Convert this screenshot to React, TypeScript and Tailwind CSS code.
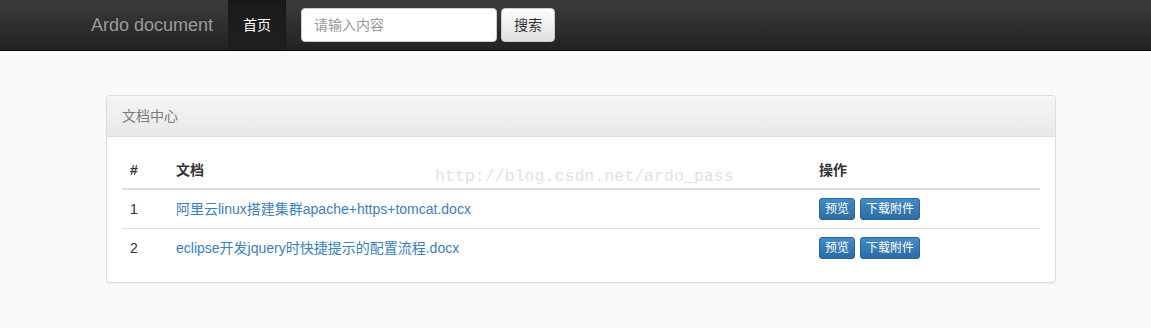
import React from 'react'

type Doc = {
  id: number
  name: string
}

const docs: Doc[] = [
  { id: 1, name: '阿里云linux搭建集群apache+https+tomcat.docx' },
  { id: 2, name: 'eclipse开发jquery时快捷提示的配置流程.docx' },
]

const font = "font-['Liberation_Sans','Noto_Sans_CJK_SC',sans-serif]"

function Navbar() {
  return (
    <nav className="h-[51px] border-b border-[#080808] bg-gradient-to-b from-[#3c3c3c] to-[#222222]">
      <div className="flex h-[50px] items-stretch pl-[76px]">
        <a className="flex items-center px-[15px] text-[18px] text-[#9d9d9d] [text-shadow:0_-1px_0_rgba(0,0,0,0.25)]">
          Ardo document
        </a>
        <a className="flex items-center bg-gradient-to-b from-[#1b1b1b] to-[#202020] px-[15px] text-[14px] text-white shadow-[inset_0_3px_9px_rgba(0,0,0,0.15)]">
          首页
        </a>
        <form className="flex items-start gap-[4px] px-[15px] pt-[8px]" onSubmit={(e) => e.preventDefault()}>
          <input
            className="h-[34px] w-[196px] rounded-[4px] border border-[#cccccc] bg-white px-[12px] text-[14px] text-[#555] placeholder:text-[#999] outline-none"
            placeholder="请输入内容"
          />
          <button
            type="submit"
            className="h-[34px] rounded-[4px] border border-[#cccccc] bg-gradient-to-b from-white to-[#e0e0e0] px-[12px] text-[14px] text-[#333]"
          >
            搜索
          </button>
        </form>
      </div>
    </nav>
  )
}

function SmallBtn({ children }: { children: React.ReactNode }) {
  return (
    <button className="h-[22px] rounded-[3px] border border-[#2b669a] bg-gradient-to-b from-[#428bca] to-[#2d6ca2] px-[5px] text-[12px] leading-[18px] text-white">
      {children}
    </button>
  )
}

export default function App() {
  return (
    <div className={`min-h-[328px] bg-[#f9f9f9] text-[14px] text-[#333] ${font}`}>
      <Navbar />

      <div className="ml-[106px] mt-[44px] w-[950px] rounded-[4px] border border-[#dddddd] bg-white shadow-[0_1px_2px_rgba(0,0,0,0.05)]">
        <div className="h-[41px] rounded-t-[4px] border-b border-[#dddddd] bg-gradient-to-b from-[#f5f5f5] to-[#e8e8e8] px-[15px] py-[10px] leading-[20px] text-[#7a7a7a]">
          文档中心
        </div>

        <div className="relative p-[15px]">
          <span className="pointer-events-none absolute left-[328px] top-[28px] font-['Liberation_Mono',monospace] text-[16.6px] text-[#e2e2e2]">
            http://blog.csdn.net/ardo_pass
          </span>

          <table className="w-full border-collapse">
            <thead>
              <tr className="border-b-2 border-[#dddddd]">
                <th className="w-[46px] p-[8px] text-left leading-[20px] font-bold">#</th>
                <th className="w-[643px] p-[8px] text-left leading-[20px] font-bold">文档</th>
                <th className="p-[8px] text-left leading-[20px] font-bold">操作</th>
              </tr>
            </thead>
            <tbody>
              {docs.map((d, i) => (
                <tr key={d.id} className={i > 0 ? 'border-t border-[#dddddd]' : ''}>
                  <td className="p-[8px] leading-[20px]">{d.id}</td>
                  <td className="p-[8px] leading-[20px]">
                    <a className="text-[#3a7fc1]">{d.name}</a>
                  </td>
                  <td className="p-[8px] leading-[20px]">
                    <div className="flex gap-[5px]">
                      <SmallBtn>预览</SmallBtn>
                      <SmallBtn>下载附件</SmallBtn>
                    </div>
                  </td>
                </tr>
              ))}
            </tbody>
          </table>
        </div>
      </div>
    </div>
  )
}
